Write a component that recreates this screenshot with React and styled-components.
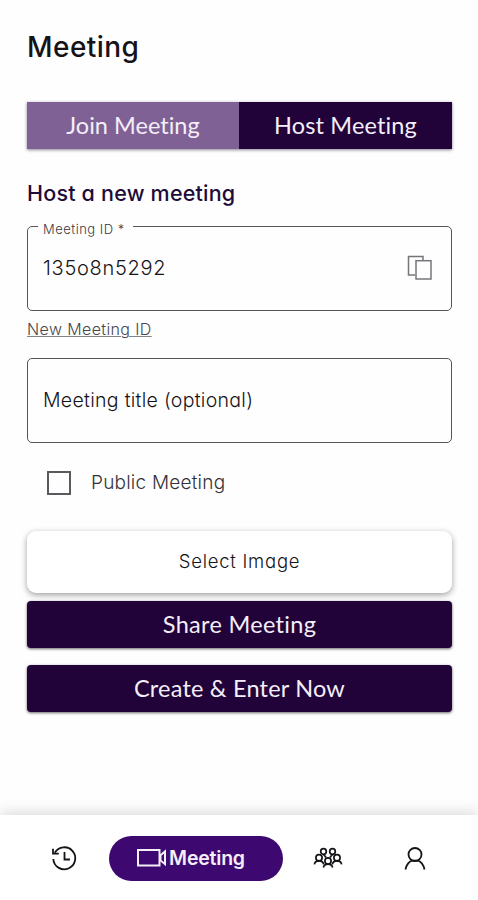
import React from "react";
import styled, { createGlobalStyle } from "styled-components";

const GlobalStyle = createGlobalStyle`
  *, *::before, *::after { box-sizing: border-box; }
  body { margin: 0; background: #fefefe; }
  button { border: 0; padding: 0; background: none; font: inherit; color: inherit; }
`;

const Screen = styled.div`
  display: flex;
  flex-direction: column;
  width: 478px;
  height: 900px;
  overflow: hidden;
  background: #fefefe;
  color: #151318;
  font-family: Inter, "Noto Sans", sans-serif;
  font-feature-settings: "cv11";
`;

const Content = styled.main`
  flex: 1;
  display: flex;
  flex-direction: column;
  padding: 26px 26px 0 27px;
`;

const Text = styled.span`
  white-space: nowrap;
  font-size: ${(p) => p.$size}px;
  font-weight: ${(p) => p.$weight || 400};
  letter-spacing: ${(p) => p.$spacing || 0}px;
  color: ${(p) => p.$color || "inherit"};
`;

const Title = styled.h1`
  margin: 0 0 36px;
  height: 40px;
  line-height: 40px;
  font-weight: 500;
`;

const Tabs = styled.div`
  display: grid;
  grid-template-columns: 212px 1fr;
  height: 47px;
  box-shadow: 0 1px 3px rgba(30, 10, 50, 0.5);
`;

const Tab = styled.button`
  display: flex;
  align-items: center;
  justify-content: center;
  padding-bottom: 2px;
  font-family: Lato, "Open Sans", sans-serif;
  color: #f4eef8;
  background: ${(p) => (p.$active ? "#210239" : "#7f6196")};
`;

const Heading = styled.h2`
  margin: 30px 0 19px;
  height: 28px;
  line-height: 28px;
  font-weight: 500;
`;

const Field = styled.div`
  position: relative;
  display: flex;
  align-items: center;
  justify-content: space-between;
  height: 85px;
  padding: 0 18px 2px 15px;
  border: 1.5px solid #56535a;
  border-radius: 5px;
`;

const FieldLabel = styled.label`
  position: absolute;
  top: -8px;
  left: 10px;
  width: 95px;
  height: 18px;
  padding-left: 5px;
  line-height: 18px;
  background: #fefefe;
`;

const NewId = styled.a`
  align-self: flex-start;
  height: 24px;
  margin: 5px 0 18px;
  line-height: 27px;
  text-decoration: underline;
  text-decoration-color: #85838a;
  text-decoration-thickness: 1px;
  text-underline-offset: 1px;
  color: #48464c;
`;

const CheckRow = styled.label`
  display: flex;
  align-items: center;
  gap: 20px;
  height: 30px;
  margin: 24px 0 34px;
  padding-left: 20px;
`;

const Checkbox = styled.span`
  width: 24px;
  height: 24px;
  margin-top: 1px;
  border: 2px solid #5b595e;
`;

const ImageButton = styled.button`
  display: flex;
  align-items: center;
  justify-content: center;
  height: 62px;
  margin-bottom: 8px;
  padding-bottom: 2px;
  border-radius: 9px;
  background: #fff;
  box-shadow: 0 2px 6px rgba(0, 0, 0, 0.38);
`;

const ActionButton = styled.button`
  display: flex;
  align-items: center;
  justify-content: center;
  height: 47px;
  margin-bottom: 17px;
  padding-bottom: 1px;
  border-radius: 4px;
  font-family: Lato, "Open Sans", sans-serif;
  color: #f4eef8;
  background: #210239;
  box-shadow: 0 1px 3px rgba(0, 0, 0, 0.6);
`;

const NavBar = styled.nav`
  display: grid;
  grid-template-columns: 82px 174px 90px 84px;
  align-items: center;
  height: 85px;
  padding: 2px 0 0 27px;
  background: #fff;
  box-shadow: 0 -4px 12px rgba(0, 0, 0, 0.12);
`;

const NavItem = styled.button`
  display: flex;
  align-items: center;
  justify-content: ${(p) => p.$align || "center"};
  padding: ${(p) => p.$pad || "0"};
  height: 45px;
`;

const NavPill = styled(NavItem)`
  gap: 3px;
  padding: 0 10px 1px 0;
  border-radius: 23px;
  background: #3d0870;
  color: #f4eef8;
`;

const Icon = styled.svg`
  display: block;
  flex: none;
  fill: none;
  stroke: currentColor;
  stroke-width: ${(p) => p.$stroke || 1.8};
`;

const CopyIcon = () => (
  <Icon width="26" height="26" viewBox="0 0 26 26" $stroke={1.5} color="#77757a">
    <path d="M8 20H1.5V1.5H16V5" />
    <rect x="9" y="5.7" width="15" height="18.3" />
  </Icon>
);

const HistoryIcon = () => (
  <Icon width="28" height="28" viewBox="0 0 28 28" $stroke={1.8}>
    <path d="M4.8 7.7A11 11 0 1 1 3.3 14" />
    <path d="M3 3.8V8.7H8.8" />
    <path d="M14.5 7V14.5H20" />
  </Icon>
);

const VideoIcon = () => (
  <Icon width="29" height="20" viewBox="0 0 29 20" $stroke={2}>
    <rect x="1" y="2" width="21.5" height="15.5" />
    <path d="M23.5 7.2L28 3.4V16.2L23.5 12.4Z" />
  </Icon>
);

const Person = ({ x, y }) => (
  <g transform={`translate(${x} ${y})`}>
    <circle cx="0" cy="0" r="3.1" />
    <path d="M-4.6 6.5Q-4 3.1 0 3.1T4.6 6.5" />
  </g>
);

const GroupIcon = () => (
  <Icon width="30" height="24" viewBox="0 0 30 24" $stroke={1.7}>
    <circle cx="10.5" cy="4.5" r="2.8" />
    <circle cx="19.5" cy="4.5" r="2.8" />
    <path d="M10.5 7.3L13 10.5M19.5 7.3L17 10.5" />
    <Person x={6} y={10.8} />
    <Person x={24} y={10.8} />
    <Person x={15} y={14} />
  </Icon>
);

const UserIcon = () => (
  <Icon width="24" height="26" viewBox="0 0 24 26" $stroke={1.8}>
    <circle cx="12" cy="8.5" r="6.5" />
    <path d="M2.5 23.5C3.4 18.5 6.5 15 9.2 14.7H14.8C17.5 15 20.6 18.5 21.5 23.5" />
  </Icon>
);

export default function App() {
  return (
    <Screen>
      <GlobalStyle />
      <Content>
        <Title><Text $size={28} $weight={500} $spacing={0.45}>Meeting</Text></Title>
        <Tabs>
          <Tab><Text $size={23.5} $spacing={0.02}>Join Meeting</Text></Tab>
          <Tab $active><Text $size={23.5} $spacing={0.15}>Host Meeting</Text></Tab>
        </Tabs>
        <Heading><Text $size={21.5} $weight={500} $spacing={0.2} $color="#210b38">Host a new meeting</Text></Heading>
        <Field>
          <FieldLabel><Text $size={13} $weight={300} $spacing={0.5} $color="#3b393f">Meeting ID *</Text></FieldLabel>
          <Text $size={20} $weight={300} $spacing={0.7}>135o8n5292</Text>
          <CopyIcon />
        </Field>
        <NewId><Text $size={16} $weight={300} $spacing={0.38}>New Meeting ID</Text></NewId>
        <Field>
          <Text $size={19.5} $weight={300} $spacing={0.3}>Meeting title (optional)</Text>
        </Field>
        <CheckRow>
          <Checkbox />
          <Text $size={19} $weight={300} $spacing={0.22} $color="#343238">Public Meeting</Text>
        </CheckRow>
        <ImageButton><Text $size={18.5} $weight={300} $spacing={0.75}>Select Image</Text></ImageButton>
        <ActionButton><Text $size={23.5} $spacing={0.3}>Share Meeting</Text></ActionButton>
        <ActionButton><Text $size={23.5} $spacing={0.2}>Create &amp; Enter Now</Text></ActionButton>
      </Content>
      <NavBar>
        <NavItem $align="flex-start" $pad="0 0 0 23px"><HistoryIcon /></NavItem>
        <NavPill>
          <VideoIcon />
          <Text $size={19.5} $weight={600} $spacing={-0.2}>Meeting</Text>
        </NavPill>
        <NavItem><GroupIcon /></NavItem>
        <NavItem><UserIcon /></NavItem>
      </NavBar>
    </Screen>
  );
}
